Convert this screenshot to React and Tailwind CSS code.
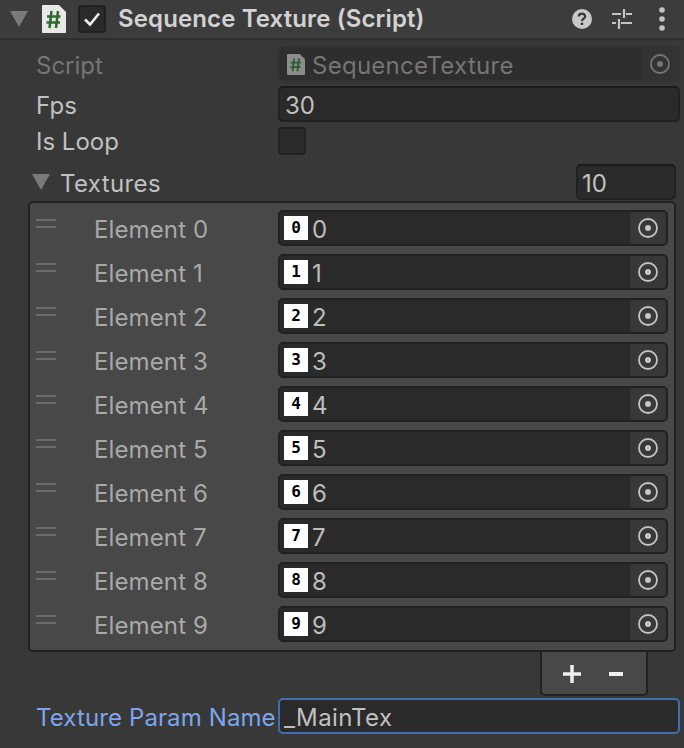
const font = { fontFamily: "Inter, 'Noto Sans', sans-serif" };

function Tri({ className }) {
  return (
    <svg className={className} viewBox="0 0 18 16" width="18" height="16">
      <path d="M0 0H18L9 16Z" fill="#7a7a7a" />
    </svg>
  );
}

function ScriptIcon({ w, h, dim }) {
  return (
    <svg width={w} height={h} viewBox="0 0 24 28" className="shrink-0">
      <path d="M1 0H17L24 7V27a1 1 0 0 1-1 1H1a1 1 0 0 1-1-1V1a1 1 0 0 1 1-1Z" fill={dim ? "#8c8c8c" : "#e8e8e8"} />
      <path d="M9.500 6L7.500 23M16 6L14 23M5 11.500H18.500M4.500 17.500H18" stroke={dim ? "#2f5a2f" : "#2e6b2e"} strokeWidth="2.500" fill="none" />
    </svg>
  );
}

function Target({ dim }) {
  const c = dim ? "#757575" : "#c4c4c4";
  return (
    <svg width="20" height="20" viewBox="0 0 20 20">
      <circle cx="10" cy="10" r="9" fill="none" stroke={c} strokeWidth="1.800" />
      <circle cx="10" cy="10" r="3" fill={c} />
    </svg>
  );
}

function Row({ n }) {
  return (
    <div className="flex h-[36px] items-stretch">
      <div className="w-[64px] pl-[6px] pt-[9px] flex flex-col gap-[5px] shrink-0">
        <div className="w-[20px] h-[2px] bg-[#6b6b6b]" />
        <div className="w-[20px] h-[2px] bg-[#6b6b6b]" />
      </div>
      <div className="w-[184px] shrink-0 flex items-center pt-[4px] text-[24px] tracking-[0.12px] text-[#a8a8a8]" style={font}>Element {n}</div>
      <div className="w-[390px] shrink-0 flex rounded-[5px] bg-[#2a2a2a] border-2 border-[#212121] overflow-hidden">
        <div className="flex-1 flex items-center pl-[4px]">
          <div className="w-[24px] h-[24px] bg-white flex items-center justify-center text-black text-[16px] font-bold" style={{ fontFamily: "'DejaVu Sans Mono', monospace" }}>{n}</div>
          <span className="ml-[4px] mt-[4px] text-[24px] text-[#bdbdbd]" style={font}>{n}</span>
        </div>
        <div className="w-[36px] bg-[#383838] flex items-center justify-center"><Target /></div>
      </div>
    </div>
  );
}

export default function App() {
  return (
    <div className="w-[684px] h-[748px] bg-[#383838] overflow-hidden flex flex-col text-[24px] text-[#c0c0c0]" style={font}>
      <div className="h-[40px] shrink-0 border-b-2 border-[#2f2f2f] bg-[#3c3c3c] flex items-center relative pl-[10px]">
        <Tri />
        <div className="ml-[14px]"><ScriptIcon w={24} h={28} /></div>
        <div className="ml-[12px] w-[28px] h-[28px] rounded-[4px] bg-[#2a2a2a] border-2 border-[#212121] flex items-center justify-center">
          <svg width="18" height="16" viewBox="0 0 18 16"><path d="M2 8.500L7 13.500L16 2.500" stroke="#ececec" strokeWidth="2.600" fill="none" /></svg>
        </div>
        <div className="ml-[12px] font-semibold text-[24px] tracking-[0.12px] text-[#d2d2d2] whitespace-nowrap">Sequence Texture (Script)</div>
        <div className="ml-auto flex items-center">
          <svg width="20" height="20" viewBox="0 0 20 20" className="mr-[20px]">
            <circle cx="10" cy="10" r="10" fill="#c8c8c8" />
            <path d="M6.800 7.600C6.800 5.800 8.200 4.700 10 4.700C11.800 4.700 13.200 5.800 13.200 7.400C13.200 9.600 10 9.600 10 12" stroke="#383838" strokeWidth="2.200" fill="none" />
            <rect x="8.800" y="13.600" width="2.400" height="2.400" fill="#383838" />
          </svg>
          <svg width="20" height="20" viewBox="0 0 20 20" className="mr-[27px]">
            <path d="M0 5H9M14 5H20M12 0V9M0 14H4M9 14H20M7 10V20" stroke="#c4c4c4" strokeWidth="2.200" fill="none" />
          </svg>
          <svg width="6" height="24" viewBox="0 0 6 24" className="mr-[19px]">
            <circle cx="3" cy="3" r="2.800" fill="#c4c4c4" /><circle cx="3" cy="12" r="2.800" fill="#c4c4c4" /><circle cx="3" cy="21" r="2.800" fill="#c4c4c4" />
          </svg>
        </div>
      </div>

      <div className="mt-[6px] h-[36px] flex shrink-0">
        <div className="w-[278px] pl-[36px] pt-[4px] flex items-center text-[#757575]">Script</div>
        <div className="w-[402px] flex rounded-[5px] bg-[#2e2e2e] border-2 border-[#323232] overflow-hidden">
          <div className="flex-1 flex items-center pl-[7px] text-[#757575]">
            <ScriptIcon w={18} h={21} dim />
            <span className="ml-[7px] mt-[4px] tracking-[0.27px]">SequenceTexture</span>
          </div>
          <div className="w-[36px] bg-[#333333] flex items-center justify-center"><Target dim /></div>
        </div>
      </div>

      <div className="mt-[4px] h-[36px] flex shrink-0">
        <div className="w-[278px] pl-[36px] pt-[4px] flex items-center">Fps</div>
        <div className="w-[402px] flex items-center rounded-[5px] bg-[#2a2a2a] border-2 border-[#212121] border-t-[#1a1a1a] pl-[5px] pt-[4px]">30</div>
      </div>

      <div className="mt-[5px] h-[28px] flex items-center shrink-0">
        <div className="w-[278px] pl-[36px] pt-[2px]">Is Loop</div>
        <div className="w-[28px] h-[28px] rounded-[4px] bg-[#2a2a2a] border-2 border-[#212121]" />
      </div>

      <div className="mt-[9px] h-[36px] flex items-center shrink-0">
        <div className="w-[576px] pl-[32px] flex items-center">
          <Tri />
          <span className="ml-[10px] mt-[4px] tracking-[0.37px]">Textures</span>
        </div>
        <div className="w-[100px] h-[36px] flex items-center rounded-[5px] bg-[#2a2a2a] border-2 border-[#212121] border-t-[#1a1a1a] pl-[4px] pt-[4px]">10</div>
      </div>

      <div className="mt-[1px] ml-[28px] w-[648px] h-[451px] shrink-0 rounded-[5px] bg-[#484848] border-2 border-[#212121] pt-[7px] flex flex-col gap-[8px]">
        {[0, 1, 2, 3, 4, 5, 6, 7, 8, 9].map((n) => <Row key={n} n={n} />)}
      </div>

      <div className="ml-[540px] w-[108px] h-[44px] shrink-0 rounded-b-[5px] bg-[#484848] border-2 border-t-0 border-[#212121] flex items-center pl-[21px] pt-[2px]">
        <svg width="18" height="18" viewBox="0 0 18 18"><path d="M9 0V18M0 9H18" stroke="#eeeeee" strokeWidth="3.500" /></svg>
        <svg width="14" height="4" viewBox="0 0 14 4" className="ml-[28px] mb-[1px]"><rect width="14" height="4" fill="#eeeeee" /></svg>
      </div>

      <div className="mt-[2px] h-[36px] flex shrink-0">
        <div className="w-[278px] pl-[36px] pt-[4px] tracking-[0.11px] flex items-center text-[#7ca6ec] whitespace-nowrap">Texture Param Name</div>
        <div className="w-[402px] flex items-center rounded-[5px] bg-[#2a2a2a] border-2 border-[#3f6fb0] pl-[4px] pt-[4px] tracking-[0.37px]">_MainTex</div>
      </div>
    </div>
  );
}
